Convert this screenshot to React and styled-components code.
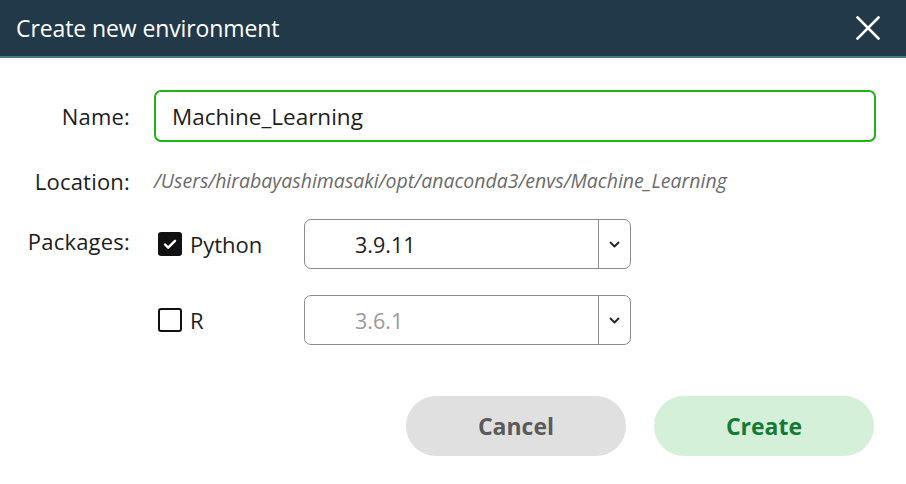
import React, { useState } from "react";
import styled, { createGlobalStyle } from "styled-components";

const GlobalStyle = createGlobalStyle`
  html, body {
    margin: 0;
    padding: 0;
    background: #ffffff;
  }
  body {
    font-family: "Open Sans", "Noto Sans", sans-serif;
    color: #1d1d1d;
  }
`;

const Dialog = styled.div`
  width: 906px;
  height: 484px;
  background: #ffffff;
  display: flex;
  flex-direction: column;
`;

const Header = styled.header`
  height: 56px;
  background-color: #22394a;
  border-bottom: 2px solid #477689;
  display: flex;
  align-items: center;
  justify-content: space-between;
  padding: 0 26px 0 16px;
`;

const Title = styled.h1`
  margin: 0;
  font-size: 23px;
  font-weight: 400;
  color: #ffffff;
  letter-spacing: -0.1px;
`;

const CloseButton = styled.button`
  width: 24px;
  height: 24px;
  padding: 0;
  border: none;
  background: transparent;
  cursor: pointer;
  display: flex;
`;

const Body = styled.div`
  display: grid;
  grid-template-columns: 130px 1fr;
  column-gap: 24px;
  padding: 32px 30px 0 0;
`;

const Label = styled.label`
  font-size: 22px;
  text-align: right;
  color: #1d1d1d;
  align-self: ${(p) => (p.$top ? "start" : "center")};
  margin-top: ${(p) => p.$offset || 0}px;
  white-space: nowrap;
  letter-spacing: 0.2px;
`;

const Field = styled.div`
  margin-top: ${(p) => p.$top || 0}px;
  display: flex;
  align-items: center;
`;

const TextInput = styled.input`
  width: 100%;
  height: 52px;
  box-sizing: border-box;
  border: 2px solid #20b512;
  border-radius: 7px;
  padding: 0 16px;
  font-family: inherit;
  font-size: 22.5px;
  color: #1d1d1d;
  outline: none;
`;

const Location = styled.span`
  height: 30px;
  line-height: 30px;
  font-size: 19.5px;
  font-style: italic;
  color: #6b6b6b;
`;

const PackageList = styled.div`
  display: flex;
  flex-direction: column;
  gap: 26px;
`;

const PackageRow = styled.div`
  display: flex;
  align-items: center;
`;

const CheckLabel = styled.label`
  width: 146px;
  margin-left: 4px;
  display: flex;
  align-items: center;
  gap: 8px;
  font-size: 22px;
  cursor: pointer;
`;

const Box = styled.span`
  width: 24px;
  height: 24px;
  box-sizing: border-box;
  border-radius: 3px;
  border: 2px solid #111;
  background: ${(p) => (p.$checked ? "#111" : "#fff")};
  display: flex;
  align-items: center;
  justify-content: center;
`;

const Select = styled.div`
  width: 327px;
  height: 50px;
  box-sizing: border-box;
  border: 1.5px solid #8c8c8c;
  border-radius: 7px;
  display: flex;
  align-items: stretch;
`;

const SelectValue = styled.span`
  flex: 1;
  display: flex;
  align-items: center;
  padding-left: 50px;
  font-size: 21.5px;
  color: ${(p) => (p.$disabled ? "#9a9a9a" : "#1d1d1d")};
  border-right: 1.5px solid #8c8c8c;
`;

const Arrow = styled.span`
  width: 31px;
  display: flex;
  align-items: center;
  justify-content: center;
`;

const Footer = styled.div`
  display: flex;
  justify-content: flex-end;
  gap: 28px;
  padding: 51px 32px 0 0;
`;

const Button = styled.button`
  width: 220px;
  height: 60px;
  border: none;
  border-radius: 30px;
  font-family: inherit;
  font-size: 23px;
  font-weight: 700;
  cursor: pointer;
  background: ${(p) => (p.$primary ? "#d4f0d8" : "#e0e0e0")};
  color: ${(p) => (p.$primary ? "#137a37" : "#5a5a5a")};
`;

const Chevron = () => (
  <svg width="11" height="7" viewBox="0 0 11 7">
    <path d="M1.5 1.5l4 4 4-4" fill="none" stroke="#222" strokeWidth="1.8" strokeLinecap="round" strokeLinejoin="round" />
  </svg>
);

const Check = ({ checked }) => (
  <Box $checked={checked}>
    {checked && (
      <svg width="16" height="16" viewBox="0 0 16 16">
        <path d="M3 8.5l3.2 3.2L13 4.8" fill="none" stroke="#fff" strokeWidth="2.4" strokeLinecap="round" strokeLinejoin="round" />
      </svg>
    )}
  </Box>
);

const Package = ({ name, version, checked, onToggle }) => (
  <PackageRow>
    <CheckLabel onClick={onToggle}>
      <Check checked={checked} />
      {name}
    </CheckLabel>
    <Select>
      <SelectValue $disabled={!checked}>{version}</SelectValue>
      <Arrow>
        <Chevron />
      </Arrow>
    </Select>
  </PackageRow>
);

const App = () => {
  const [name, setName] = useState("Machine_Learning");
  const [python, setPython] = useState(true);
  const [r, setR] = useState(false);

  return (
    <>
      <GlobalStyle />
      <Dialog>
        <Header>
          <Title>Create new environment</Title>
          <CloseButton aria-label="Close">
            <svg width="24" height="24" viewBox="0 0 24 24">
              <path d="M1.5 1.5l21 21M22.5 1.5l-21 21" stroke="#fff" strokeWidth="2.6" strokeLinecap="square" />
            </svg>
          </CloseButton>
        </Header>
        <Body>
          <Label>Name:</Label>
          <Field>
            <TextInput value={name} onChange={(e) => setName(e.target.value)} />
          </Field>

          <Label $offset={24}>Location:</Label>
          <Field $top={24}>
            <Location>/Users/hirabayashimasaki/opt/anaconda3/envs/{name}</Location>
          </Field>

          <Label $top $offset={30}>Packages:</Label>
          <Field $top={23}>
            <PackageList>
              <Package name="Python" version="3.9.11" checked={python} onToggle={() => setPython(!python)} />
              <Package name="R" version="3.6.1" checked={r} onToggle={() => setR(!r)} />
            </PackageList>
          </Field>
        </Body>
        <Footer>
          <Button>Cancel</Button>
          <Button $primary>Create</Button>
        </Footer>
      </Dialog>
    </>
  );
};

export default App;
